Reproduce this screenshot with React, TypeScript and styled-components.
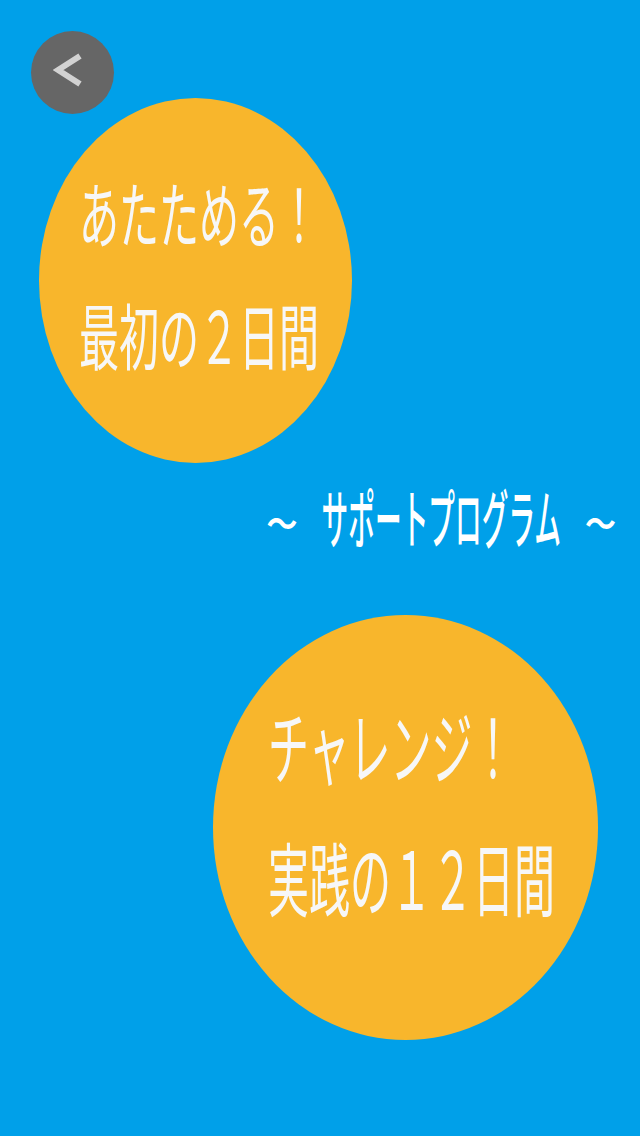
import React from "react";
import styled, { createGlobalStyle } from "styled-components";

const GlobalStyle = createGlobalStyle`
  html, body {
    margin: 0;
    padding: 0;
    background: #00a0e9;
  }
  body {
    font-family: "Noto Sans CJK JP", "Noto Sans", sans-serif;
  }
`;

const Page = styled.div`
  position: relative;
  width: 640px;
  height: 1136px;
  background: #00a0e9;
  display: flex;
  flex-direction: column;
  padding-top: 98px;
  box-sizing: border-box;
  overflow: hidden;
`;

const BackButton = styled.button`
  position: absolute;
  top: 31px;
  left: 31px;
  width: 83px;
  height: 83px;
  border-radius: 50%;
  border: none;
  padding: 0;
  background: #666666;
  display: flex;
  align-items: center;
  justify-content: center;
  cursor: pointer;
`;

const Bubble = styled.div<{ $left: number; $w: number; $h: number; $padL: number; $padB: number }>`
  margin-left: ${(p) => p.$left}px;
  width: ${(p) => p.$w}px;
  height: ${(p) => p.$h}px;
  border-radius: 50%;
  background: #f8b62c;
  display: flex;
  align-items: center;
  justify-content: center;
  box-sizing: border-box;
  padding-left: ${(p) => p.$padL}px;
  padding-bottom: ${(p) => p.$padB}px;
`;

const Lines = styled.div<{ $gap: number }>`
  display: flex;
  flex-direction: column;
  align-items: flex-start;
  gap: ${(p) => p.$gap}px;
`;

const Line = styled.span<{ $size: number; $scale: number }>`
  display: inline-block;
  font-size: ${(p) => p.$size}px;
  line-height: 1;
  color: #f7f7f7;
  font-weight: 400;
  white-space: nowrap;
  transform: scaleY(${(p) => p.$scale});
`;

const Subtitle = styled.div`
  display: flex;
  justify-content: flex-end;
  align-items: center;
  gap: 24px;
  padding-right: 24px;
  margin-top: 40px;
  height: 36px;
  margin-bottom: 76px;
`;

const SubLabel = styled.span`
  display: inline-block;
  font-size: 26.7px;
  line-height: 1;
  color: #ffffff;
  font-weight: 500;
  white-space: nowrap;
  transform: translateY(-4px) scaleY(2.4);
`;

const Tilde = styled.span`
  display: inline-block;
  font-size: 31px;
  line-height: 1;
  color: #ffffff;
  font-weight: 700;
  transform: scaleY(1.15);
`;

export default function App() {
  return (
    <>
      <GlobalStyle />
      <Page>
        <BackButton aria-label="back">
          <svg width="40" height="40" viewBox="0 0 40 40">
            <polyline
              points="29,10 7,24 29,38"
              transform="translate(-2,-7)"
              fill="none"
              stroke="#d2d2d2"
              strokeWidth="6"
              strokeLinecap="butt"
              strokeLinejoin="miter"
            />
          </svg>
        </BackButton>
        <Bubble $left={39} $w={313} $h={365} $padL={7} $padB={18}>
          <Lines $gap={82}>
            <Line $size={40} $scale={1.8}>あたためる！</Line>
            <Line $size={40} $scale={1.8}>最初の２日間</Line>
          </Lines>
        </Bubble>
        <Subtitle>
          <Tilde>～</Tilde>
          <SubLabel>サポートプログラム</SubLabel>
          <Tilde>～</Tilde>
        </Subtitle>
        <Bubble $left={213} $w={385} $h={425} $padL={12} $padB={36}>
          <Lines $gap={91}>
            <Line $size={41} $scale={1.95}>チャレンジ！</Line>
            <Line $size={41} $scale={1.95}>実践の１２日間</Line>
          </Lines>
        </Bubble>
      </Page>
    </>
  );
}
